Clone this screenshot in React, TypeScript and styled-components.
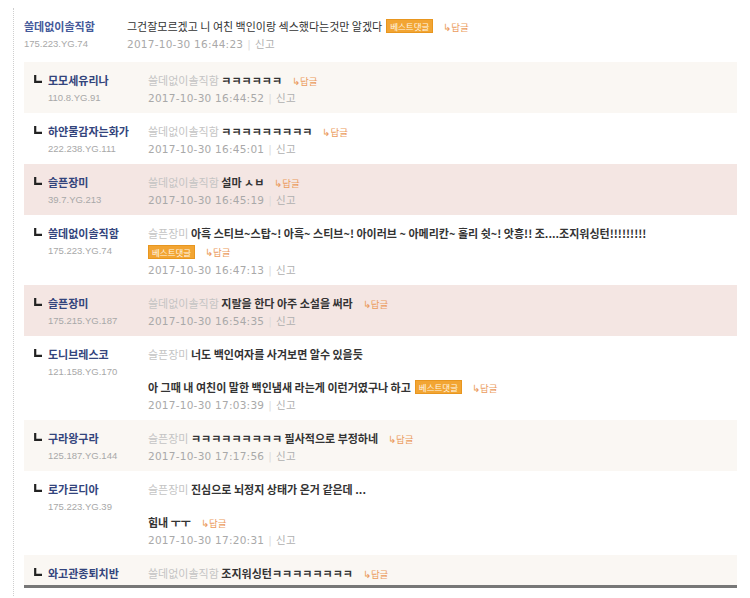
import styled, { createGlobalStyle } from "styled-components";

type Tone = "plain" | "warm" | "pink";

interface Reply {
  name: string;
  ip?: string;
  to: string;
  paragraphs: string[];
  best?: boolean;
  tagsOwnLine?: boolean;
  date?: string;
  tone: Tone;
}

// last one is cut off by the list's bottom edge, only its first line shows
const replies: Reply[] = [
  { name: "모모세유리나", ip: "110.8.YG.91", to: "쓸데없이솔직함", paragraphs: ["ㅋㅋㅋㅋㅋㅋ"], date: "2017-10-30 16:44:52", tone: "warm" },
  { name: "하얀물감자는화가", ip: "222.238.YG.111", to: "쓸데없이솔직함", paragraphs: ["ㅋㅋㅋㅋㅋㅋㅋㅋㅋ"], date: "2017-10-30 16:45:01", tone: "plain" },
  { name: "슬픈장미", ip: "39.7.YG.213", to: "쓸데없이솔직함", paragraphs: ["설마 ㅅㅂ"], date: "2017-10-30 16:45:19", tone: "pink" },
  {
    name: "쓸데없이솔직함",
    ip: "175.223.YG.74",
    to: "슬픈장미",
    paragraphs: ["아흑 스티브~스탑~! 아흑~ 스티브~! 아이러브 ~ 아메리칸~ 홀리 쉿~! 앗흥!! 조....조지워싱턴!!!!!!!!!"],
    best: true,
    tagsOwnLine: true,
    date: "2017-10-30 16:47:13",
    tone: "plain",
  },
  { name: "슬픈장미", ip: "175.215.YG.187", to: "쓸데없이솔직함", paragraphs: ["지랄을 한다 아주 소설을 써라"], date: "2017-10-30 16:54:35", tone: "pink" },
  {
    name: "도니브레스코",
    ip: "121.158.YG.170",
    to: "슬픈장미",
    paragraphs: ["너도 백인여자를 사겨보면 알수 있을듯", "아 그때 내 여친이 말한 백인냄새 라는게 이런거였구나 하고"],
    best: true,
    date: "2017-10-30 17:03:39",
    tone: "plain",
  },
  { name: "구라왕구라", ip: "125.187.YG.144", to: "슬픈장미", paragraphs: ["ㅋㅋㅋㅋㅋㅋㅋㅋㅋ 필사적으로 부정하네"], date: "2017-10-30 17:17:56", tone: "warm" },
  {
    name: "로가르디아",
    ip: "175.223.YG.39",
    to: "슬픈장미",
    paragraphs: ["진심으로 뇌정지 상태가 온거 같은데 ...", "힘내 ㅜㅜ"],
    date: "2017-10-30 17:20:31",
    tone: "plain",
  },
  { name: "와고관종퇴치반", to: "쓸데없이솔직함", paragraphs: ["조지워싱턴ㅋㅋㅋㅋㅋㅋㅋㅋ"], tone: "warm" },
];

function Tags({ best, solo }: { best?: boolean; solo?: boolean }) {
  return (
    <>
      {best && <Badge $solo={solo}>베스트댓글</Badge>}
      <ReplyLink>↳답글</ReplyLink>
    </>
  );
}

function DateLine({ date }: { date: string }) {
  return (
    <Meta>
      {date}
      <Bar>|</Bar>
      <Report>신고</Report>
    </Meta>
  );
}

function ReplyRow({ r }: { r: Reply }) {
  const last = r.paragraphs.length - 1;
  return (
    <Row $tone={r.tone}>
      <Corner>
        <svg width="8" height="8" viewBox="0 0 8 8">
          <path d="M1.2 0 V6.8 H8" fill="none" stroke="#222" strokeWidth="2.2" />
        </svg>
      </Corner>
      <Author>
        <Name>{r.name}</Name>
        {r.ip && <Ip>{r.ip}</Ip>}
      </Author>
      <Body>
        {r.paragraphs.map((p, idx) => (
          <Para key={idx} $gap={idx > 0}>
            {idx === 0 && <Mention>{r.to} </Mention>}
            {p}
            {idx === last && !r.tagsOwnLine && <Tags best={r.best} />}
          </Para>
        ))}
        {r.tagsOwnLine && (
          <TagLine>
            <Tags best={r.best} solo />
          </TagLine>
        )}
        {r.date && <DateLine date={r.date} />}
      </Body>
    </Row>
  );
}

export default function App() {
  return (
    <>
      <GlobalStyle />
      <Page>
        <Thread>
          <TopRow>
            <Author>
              <Name $light>쓸데없이솔직함</Name>
              <Ip>175.223.YG.74</Ip>
            </Author>
            <Body>
              <Para $plain>
                그건잘모르겠고 니 여친 백인이랑 섹스했다는것만 알겠다
                <Tags best />
              </Para>
              <DateLine date="2017-10-30 16:44:23" />
            </Body>
          </TopRow>

          <ReplyList>
            {replies.map((r, idx) => (
              <ReplyRow key={idx} r={r} />
            ))}
          </ReplyList>
        </Thread>
      </Page>
    </>
  );
}

//Styled Components
const GlobalStyle = createGlobalStyle`
  body {
    margin: 0;
    background: #fff;
    font-family: "Noto Sans CJK KR", "Liberation Sans", sans-serif;
  }
`;

const Page = styled.div`
  padding: 8px 0 0 13px;
  width: 750px;
  height: 598px;
  box-sizing: border-box;
  overflow: hidden;
`;

const Thread = styled.div`
  width: 724px;
  height: 588px;
  padding-left: 10px;
  box-sizing: border-box;
  border-left: 1px dotted #cfcfcf;
`;

const TopRow = styled.div`
  display: grid;
  grid-template-columns: 103px 1fr;
  padding: 10px 0 10px;
`;

const ReplyList = styled.div`
  height: 523px;
  overflow: hidden;
  border-bottom: 3px solid #777;
  background: #faf7f3;
`;

const toneBg: Record<Tone, string> = {
  plain: "#ffffff",
  warm: "#faf7f3",
  pink: "#f4e6e3",
};

const Row = styled.div<{ $tone: Tone }>`
  display: grid;
  grid-template-columns: 14px 100px 1fr;
  padding: 10px 0 7px 10px;
  background: ${(p) => toneBg[p.$tone]};
`;

const Corner = styled.div`
  height: 17px;
  display: flex;
  align-items: center;
  padding-bottom: 3px;
  box-sizing: border-box;
`;

const Author = styled.div`
  display: flex;
  flex-direction: column;
`;

const Name = styled.div<{ $light?: boolean }>`
  height: 17px;
  font-size: 11px;
  line-height: 17px;
  font-weight: 700;
  color: ${(p) => (p.$light ? "#44599a" : "#33447c")};
  white-space: nowrap;
`;

const Ip = styled.div`
  height: 17px;
  font-family: "Liberation Sans", sans-serif;
  font-size: 9.5px;
  line-height: 17px;
  color: #a8a8a8;
`;

const Body = styled.div`
  display: flex;
  flex-direction: column;
`;

const Para = styled.div<{ $gap?: boolean; $plain?: boolean }>`
  height: 17px;
  font-size: 11px;
  line-height: 17px;
  font-weight: ${(p) => (p.$plain ? 400 : 700)};
  color: #333;
  margin-top: ${(p) => (p.$gap ? "16px" : "0")};
  white-space: nowrap;
`;

const TagLine = styled.div`
  height: 19px;
  display: flex;
  align-items: center;
  font-size: 11px;
`;

const Mention = styled.span`
  font-weight: 400;
  color: #c4c4c4;
`;

const Badge = styled.span<{ $solo?: boolean }>`
  display: inline-block;
  margin-left: ${(p) => (p.$solo ? "0" : "4px")};
  padding: 0 3px;
  height: 12px;
  line-height: 12px;
  font-size: 8.5px;
  font-weight: 400;
  color: #fff6e6;
  background: #f2a533;
  border: 1px solid #e8961f;
  vertical-align: 1px;
`;

const ReplyLink = styled.span`
  margin-left: 10px;
  font-size: 9.5px;
  font-weight: 400;
  color: #eb9c5e;
`;

const Meta = styled.div`
  height: 17px;
  font-family: "DejaVu Sans", sans-serif;
  font-size: 10.5px;
  letter-spacing: 0.25px;
  line-height: 17px;
  color: #a9a9a9;
`;

const Bar = styled.span`
  margin: 0 4px;
  color: #dcdcdc;
`;

const Report = styled.span`
  font-family: "Noto Sans CJK KR", sans-serif;
  color: #b0b0b0;
`;
